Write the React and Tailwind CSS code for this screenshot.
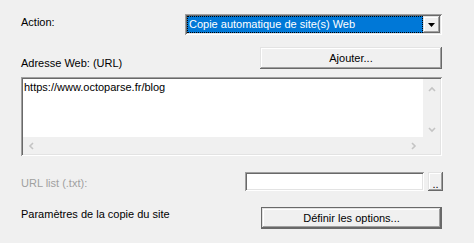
import React from "react";

const font = { fontFamily: '"Liberation Sans", Arial, sans-serif' };

const raised =
  "shadow-[inset_-1px_-1px_#696969,inset_1px_1px_#e3e3e3,inset_-2px_-2px_#a0a0a0,inset_2px_2px_#ffffff]";
const sunken =
  "shadow-[inset_1px_1px_#a0a0a0,inset_-1px_-1px_#ffffff,inset_2px_2px_#696969,inset_-2px_-2px_#e3e3e3]";

function Chevron({ dir }) {
  const paths = {
    up: "M1 5 L4 2 L7 5",
    down: "M1 2 L4 5 L7 2",
    left: "M5 1 L2 4 L5 7",
    right: "M2 1 L5 4 L2 7",
  };
  const w = dir === "up" || dir === "down" ? 8 : 7;
  const h = dir === "up" || dir === "down" ? 7 : 8;
  return (
    <svg width={w} height={h} viewBox={`0 0 ${w} ${h}`}>
      <path d={paths[dir]} fill="none" stroke="#c4c4c4" strokeWidth="1.6" />
    </svg>
  );
}

export default function App() {
  return (
    <div
      className="w-[474px] h-[243px] bg-[#f0f0f0] text-[11px] leading-[13px] text-black pl-[21px] pt-[14px] overflow-hidden"
      style={font}
    >
      {/* Row 1 */}
      <div className="flex items-start h-[21px]">
        <div className="w-[164px] mt-[2px]">Action:</div>
        <div className={`w-[257px] h-[21px] bg-white p-[2px] flex ${sunken}`}>
          <div className="flex-1 bg-[#0078d7] border border-dotted border-[#ffd400] outline-1 outline-dotted outline-black -outline-offset-1 text-white pl-[1px] leading-[15px]">
            Copie automatique de site(s) Web
          </div>
          <div className={`w-[17px] bg-[#f0f0f0] flex items-center justify-center ${raised}`}>
            <svg width="7" height="4" viewBox="0 0 7 4">
              <path d="M0 0 H7 L3.5 4 Z" fill="#000" />
            </svg>
          </div>
        </div>
      </div>

      {/* Row 2 */}
      <div className="flex items-start mt-[12px] h-[22px]">
        <div className="w-[239px] mt-[10px]">Adresse Web: (URL)</div>
        <div className={`w-[182px] h-[22px] flex items-center justify-center ${raised}`}>
          Ajouter...
        </div>
      </div>

      {/* Textarea */}
      <div className={`mt-[8px] w-[421px] h-[79px] bg-white p-[2px] ${sunken}`}>
        <div className="grid grid-cols-[1fr_17px] grid-rows-[1fr_17px] w-full h-full">
          <div className="bg-white pl-[1px] pt-[2px]">https://www.octoparse.fr/blog</div>
          <div className="bg-[#f0f0f0] flex flex-col items-center justify-between pt-[7px] pb-[4px]">
            <Chevron dir="up" />
            <Chevron dir="down" />
          </div>
          <div className="bg-[#f0f0f0] flex items-center justify-between pl-[5px] pr-[6px]">
            <Chevron dir="left" />
            <Chevron dir="right" />
          </div>
          <div className="bg-[#f0f0f0]" />
        </div>
      </div>

      {/* Row 4 */}
      <div className="flex items-start mt-[16px] h-[19px]">
        <div className="w-[224px] mt-[5px] text-[#a0a0a0]">URL list (.txt):</div>
        <div className={`w-[179px] h-[19px] bg-white ${sunken}`} />
        <div className={`ml-[4px] w-[15px] h-[19px] flex items-end justify-center pb-[3px] leading-[8px] ${raised}`}>
          ..
        </div>
      </div>

      {/* Row 5 */}
      <div className="flex items-start mt-[16px] h-[22px]">
        <div className="w-[240px] mt-[1px]">Paramètres de la copie du site</div>
        <div className="w-[181px] h-[22px] border border-[#696969]">
          <div className={`w-full h-full flex items-center justify-center ${raised}`}>
            Définir les options...
          </div>
        </div>
      </div>
    </div>
  );
}
